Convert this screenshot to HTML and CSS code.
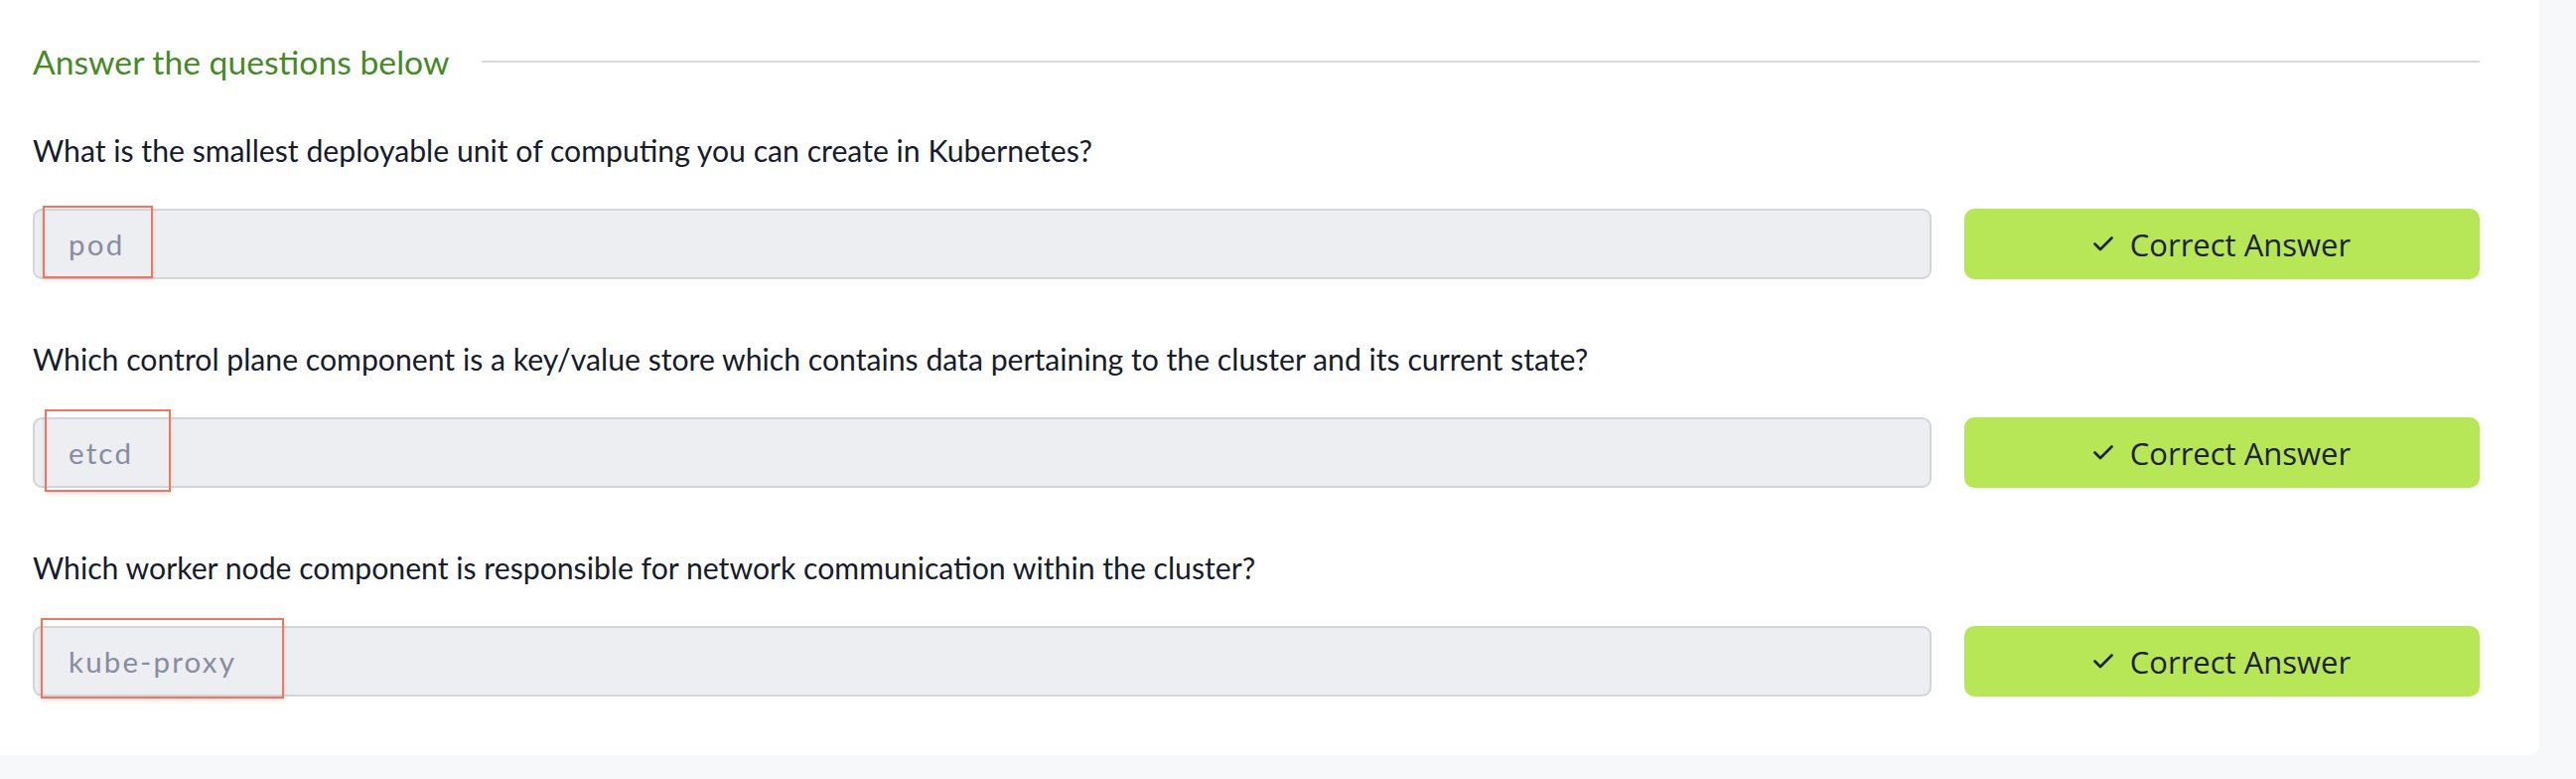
FILE: index.html
```html
<!DOCTYPE html>
<html lang="en">
<head>
<meta charset="utf-8">
<title>Answer the questions below</title>
<link rel="stylesheet" href="styles.css">
</head>
<body>
<div class="page">
  <section class="card">
    <div class="section-head">
      <h2 class="section-title">Answer the questions below</h2>
      <div class="section-rule"></div>
    </div>

    <div class="qa">
      <p class="question">What is the smallest deployable unit of computing you can create in Kubernetes?</p>
      <div class="answer-row">
        <div class="answer-field">
          <span class="answer-text">pod</span>
          <span class="mark mark-1"></span>
        </div>
        <button class="answer-btn"><svg class="check" viewBox="0 0 20 15" width="20" height="15"><path d="M1.5 7.5 L7 13 L18.5 1.5" fill="none" stroke="currentColor" stroke-width="2.6" stroke-linecap="round" stroke-linejoin="round"/></svg>Correct Answer</button>
      </div>
    </div>

    <div class="qa">
      <p class="question">Which control plane component is a key/value store which contains data pertaining to the cluster and its current state?</p>
      <div class="answer-row">
        <div class="answer-field">
          <span class="answer-text">etcd</span>
          <span class="mark mark-2"></span>
        </div>
        <button class="answer-btn"><svg class="check" viewBox="0 0 20 15" width="20" height="15"><path d="M1.5 7.5 L7 13 L18.5 1.5" fill="none" stroke="currentColor" stroke-width="2.6" stroke-linecap="round" stroke-linejoin="round"/></svg>Correct Answer</button>
      </div>
    </div>

    <div class="qa">
      <p class="question">Which worker node component is responsible for network communication within the cluster?</p>
      <div class="answer-row">
        <div class="answer-field">
          <span class="answer-text">kube-proxy</span>
          <span class="mark mark-3"></span>
        </div>
        <button class="answer-btn"><svg class="check" viewBox="0 0 20 15" width="20" height="15"><path d="M1.5 7.5 L7 13 L18.5 1.5" fill="none" stroke="currentColor" stroke-width="2.6" stroke-linecap="round" stroke-linejoin="round"/></svg>Correct Answer</button>
      </div>
    </div>
  </section>
</div>
</body>
</html>
```

FILE: styles.css
```css
* { box-sizing: border-box; }

html, body {
  margin: 0;
  padding: 0;
  background: #f7f8fa;
  height: 100%;
}

.page {
  display: flex;
  padding-right: 37px;
}

.card {
  flex: 1;
  background: #ffffff;
  border-bottom-right-radius: 10px;
  padding: 40px 60px 59px 33px;
  font-family: "Lato", "Liberation Sans", sans-serif;
}

.section-head {
  display: flex;
  align-items: center;
  gap: 33px;
  height: 44px;
}

.section-title {
  margin: 0;
  font-weight: 400;
  font-size: 33.7px;
  color: #468a27;
  line-height: 44px;
  white-space: nowrap;
}

.section-rule {
  flex: 1;
  height: 2px;
  background: #d8dadf;
}

.qa { margin-top: 46px; }
.qa + .qa { margin-top: 59px; }

.question {
  margin: 0 0 37px 0;
  font-size: 30.2px;
  line-height: 43px;
  color: #161c2d;
}

.answer-row {
  display: flex;
  gap: 33px;
  height: 71px;
}

.answer-field {
  position: relative;
  flex: 1;
  display: flex;
  align-items: center;
  padding-left: 34px;
  background: #edeef2;
  border: 2px solid #d3d5db;
  border-radius: 9px;
}

.answer-text {
  font-size: 29.5px;
  letter-spacing: 2.2px;
  color: #878ca0;
}

.answer-btn {
  width: 519px;
  display: flex;
  align-items: center;
  justify-content: center;
  gap: 17px;
  border: 0;
  border-radius: 10px;
  background: #b7e656;
  color: #1c2133;
  font-family: "Open Sans", "Noto Sans", sans-serif;
  font-size: 31px;
  padding: 0;
}

.check {
  display: block;
  flex: none;
}

.mark {
  position: absolute;
  border: 2px solid #ef765f;
  box-shadow: 0 2px 4px rgba(0, 0, 0, 0.12);
  pointer-events: none;
}
.mark-1 { left: 8px; top: -5px; width: 111px; height: 73px; }
.mark-2 { left: 10px; top: -10px; width: 127px; height: 83px; }
.mark-3 { left: 6px; top: -10px; width: 245px; height: 81px; }
```
